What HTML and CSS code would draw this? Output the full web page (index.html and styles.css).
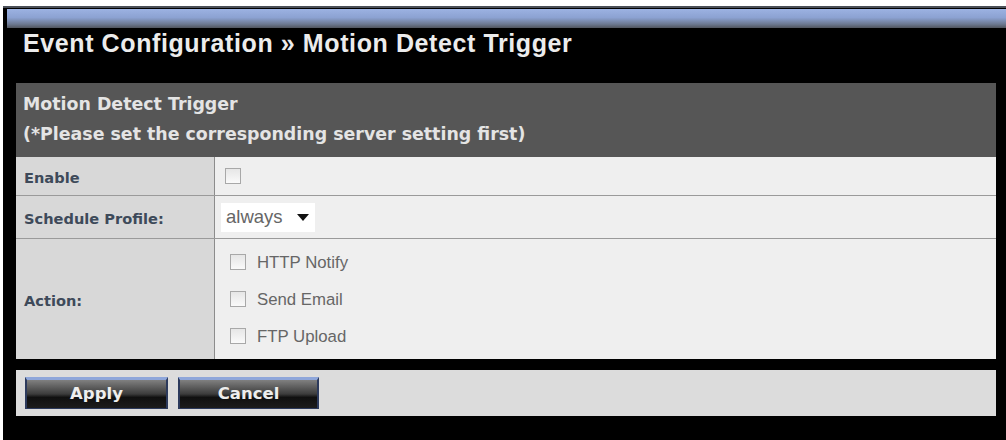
FILE: index.html
```html
<!DOCTYPE html>
<html>
<head>
<meta charset="utf-8">
<link rel="stylesheet" href="styles.css">
</head>
<body>
<div class="frame">
  <div class="topbar"></div>
  <h1 class="title">Event Configuration » Motion Detect Trigger</h1>
  <div class="panel">
    <div class="panel-head">
      <div>Motion Detect Trigger</div>
      <div>(*Please set the corresponding server setting first)</div>
    </div>
    <div class="row row-enable">
      <div class="label">Enable</div>
      <div class="value"><span class="cb"></span></div>
    </div>
    <div class="row row-sched">
      <div class="label">Schedule Profile:</div>
      <div class="value"><span class="select">always <span class="arrow"></span></span></div>
    </div>
    <div class="row row-action">
      <div class="label">Action:</div>
      <div class="value actions">
        <label class="opt"><span class="cb"></span>HTTP Notify</label>
        <label class="opt"><span class="cb"></span>Send Email</label>
        <label class="opt"><span class="cb"></span>FTP Upload</label>
      </div>
    </div>
  </div>
  <div class="buttonbar">
    <span class="btn btn-apply">Apply</span>
    <span class="btn btn-cancel">Cancel</span>
  </div>
</div>
</body>
</html>
```

FILE: styles.css
```css
html, body {
  margin: 0;
  padding: 0;
  background: #ffffff;
}
body {
  padding: 6px 0 0 3px;
  height: 440px;
  box-sizing: border-box;
  overflow: hidden;
}
.frame {
  background: #000;
  height: 434px;
  border-top: 2px solid #4a4f58;
  box-sizing: border-box;
  padding-top: 1px;
}
.topbar {
  margin-left: 4px;
  height: 19px;
  background: linear-gradient(#9cb2e2, #8ca2d2 45%, #6c7890 80%, #50555e);
}
.title {
  margin: 0;
  height: 55px;
  padding: 1px 0 0 20px;
  box-sizing: border-box;
  font-family: "Liberation Sans", Arial, sans-serif;
  font-weight: bold;
  font-size: 25px;
  letter-spacing: 0.6px;
  line-height: 28px;
  color: #ececec;
}
.panel {
  margin-left: 13px;
  width: 980px;
}
.panel-head {
  background: #565656;
  height: 74px;
  box-sizing: border-box;
  padding: 6px 0 0 7px;
  font-family: "DejaVu Sans", Verdana, sans-serif;
  font-weight: bold;
  font-size: 17.4px;
  line-height: 30px;
  color: #e4e4e4;
}
.row {
  display: flex;
  border-top: 1px solid #9a9a9a;
  font-family: "DejaVu Sans", Verdana, sans-serif;
  font-size: 14.6px;
  font-weight: bold;
}
.row-enable { height: 38px; border-top: none; }
.row-sched { height: 42px; }
.row-action { height: 120px; }
.label {
  width: 199px;
  flex: none;
  background: #d8d8d8;
  border-right: 1px solid #8c8c8c;
  display: flex;
  align-items: center;
  padding: 2px 0 0 8px;
  box-sizing: border-box;
  color: #3e4a5a;
}
.value {
  flex: 1;
  background: #efefef;
  display: flex;
  align-items: center;
  padding-left: 10px;
  color: #555;
  font-weight: normal;
}
.cb {
  display: inline-block;
  width: 16px;
  height: 16px;
  border: 1px solid #a8a8a8;
  background: linear-gradient(#e6e6e6, #fafafa);
  box-sizing: border-box;
}
.select {
  display: inline-flex;
  align-items: center;
  background: #fff;
  height: 29px;
  padding: 0 6px 0 5px;
  margin-left: -4px;
  font-family: "Liberation Sans", Arial, sans-serif;
  font-size: 18.5px;
  color: #666;
}
.arrow {
  display: inline-block;
  margin-left: 14px;
  width: 0;
  height: 0;
  border-left: 6px solid transparent;
  border-right: 6px solid transparent;
  border-top: 7px solid #111;
}
.actions {
  flex-direction: column;
  align-items: flex-start;
  justify-content: center;
  gap: 14px;
  padding-left: 15px;
}
.opt {
  display: flex;
  align-items: center;
  gap: 11px;
  font-family: "Liberation Sans", Arial, sans-serif;
  font-size: 16.8px;
  line-height: 23px;
  color: #666;
}
.buttonbar {
  margin: 11px 0 0 13px;
  width: 980px;
  height: 46px;
  background: #dcdcdc;
  display: flex;
  align-items: center;
  gap: 10px;
  padding-left: 9px;
  box-sizing: border-box;
}
.btn {
  display: inline-flex;
  align-items: center;
  justify-content: center;
  height: 32px;
  padding-bottom: 2px;
  box-sizing: border-box;
  border: 1px solid #2c3a5c;
  border-left-width: 2px;
  border-right-width: 2px;
  border-top: 3px solid #8ea6da;
  background: linear-gradient(#808080, #3c3c3c 50%, #101010 62%, #1c1c1c);
  font-family: "DejaVu Sans", Verdana, sans-serif;
  font-weight: bold;
  font-size: 16.5px;
  color: #eeeeee;
}
.btn-apply { width: 143px; }
.btn-cancel { width: 141px; }
```
